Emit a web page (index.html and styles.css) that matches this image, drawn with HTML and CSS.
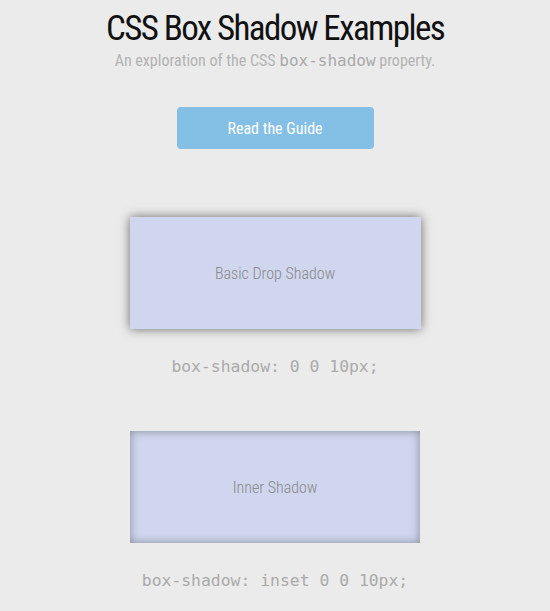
FILE: index.html
```html
<!DOCTYPE html>
<html>
<head>
<meta charset="utf-8">
<link rel="stylesheet" href="styles.css">
</head>
<body>
<div class="page">
  <h1 class="title">CSS Box Shadow Examples</h1>
  <p class="subtitle">An exploration of the CSS <code class="inline-code">box-shadow</code> property.</p>
  <a class="btn" href="#">Read the Guide</a>
  <div class="example">
    <div class="box box-drop">Basic Drop Shadow</div>
    <code class="code">box-shadow: 0 0 10px;</code>
  </div>
  <div class="example">
    <div class="box box-inset">Inner Shadow</div>
    <code class="code">box-shadow: inset 0 0 10px;</code>
  </div>
</div>
</body>
</html>
```

FILE: styles.css
```css
html, body {
  margin: 0;
  padding: 0;
  background: #ebebeb;
}
body {
  font-family: "Roboto Condensed", "DejaVu Sans Condensed", sans-serif;
  font-stretch: condensed;
  color: #111;
}
.page {
  display: flex;
  flex-direction: column;
  align-items: center;
  text-align: center;
}
.title {
  margin: 0;
  padding-top: 9px;
  font-size: 35px;
  line-height: 40px;
  letter-spacing: -1.6px;
  font-weight: 400;
  color: #111;
}
.subtitle {
  margin: 1px 0 0;
  font-size: 16px;
  line-height: 22px;
  color: #b3b3b3;
}
.inline-code {
  font-family: "DejaVu Sans Mono", monospace;
  font-size: 16px;
  color: #a9a9a9;
}
.btn {
  display: flex;
  align-items: center;
  justify-content: center;
  margin-top: 35px;
  width: 197px;
  height: 42px;
  background: #84bfe6;
  border-radius: 4px;
  color: #fff;
  font-size: 16px;
  text-decoration: none;
}
.example {
  display: flex;
  flex-direction: column;
  align-items: center;
  margin-top: 68px;
}
.example + .example {
  margin-top: 54px;
}
.box {
  display: flex;
  align-items: center;
  justify-content: center;
  width: 291px;
  height: 112px;
  background: #cfd6ee;
  color: #888888;
  font-size: 16px;
  font-weight: 300;
}
.box-drop {
  box-shadow: 0 0 10px rgba(0, 0, 0, 0.55);
}
.box-inset {
  width: 290px;
  box-shadow: inset 0 0 10px rgba(0, 0, 0, 0.35);
}
.code {
  margin-top: 28px;
  font-family: "DejaVu Sans Mono", monospace;
  font-size: 16.4px;
  line-height: 20px;
  color: #aaaaaa;
}
```
